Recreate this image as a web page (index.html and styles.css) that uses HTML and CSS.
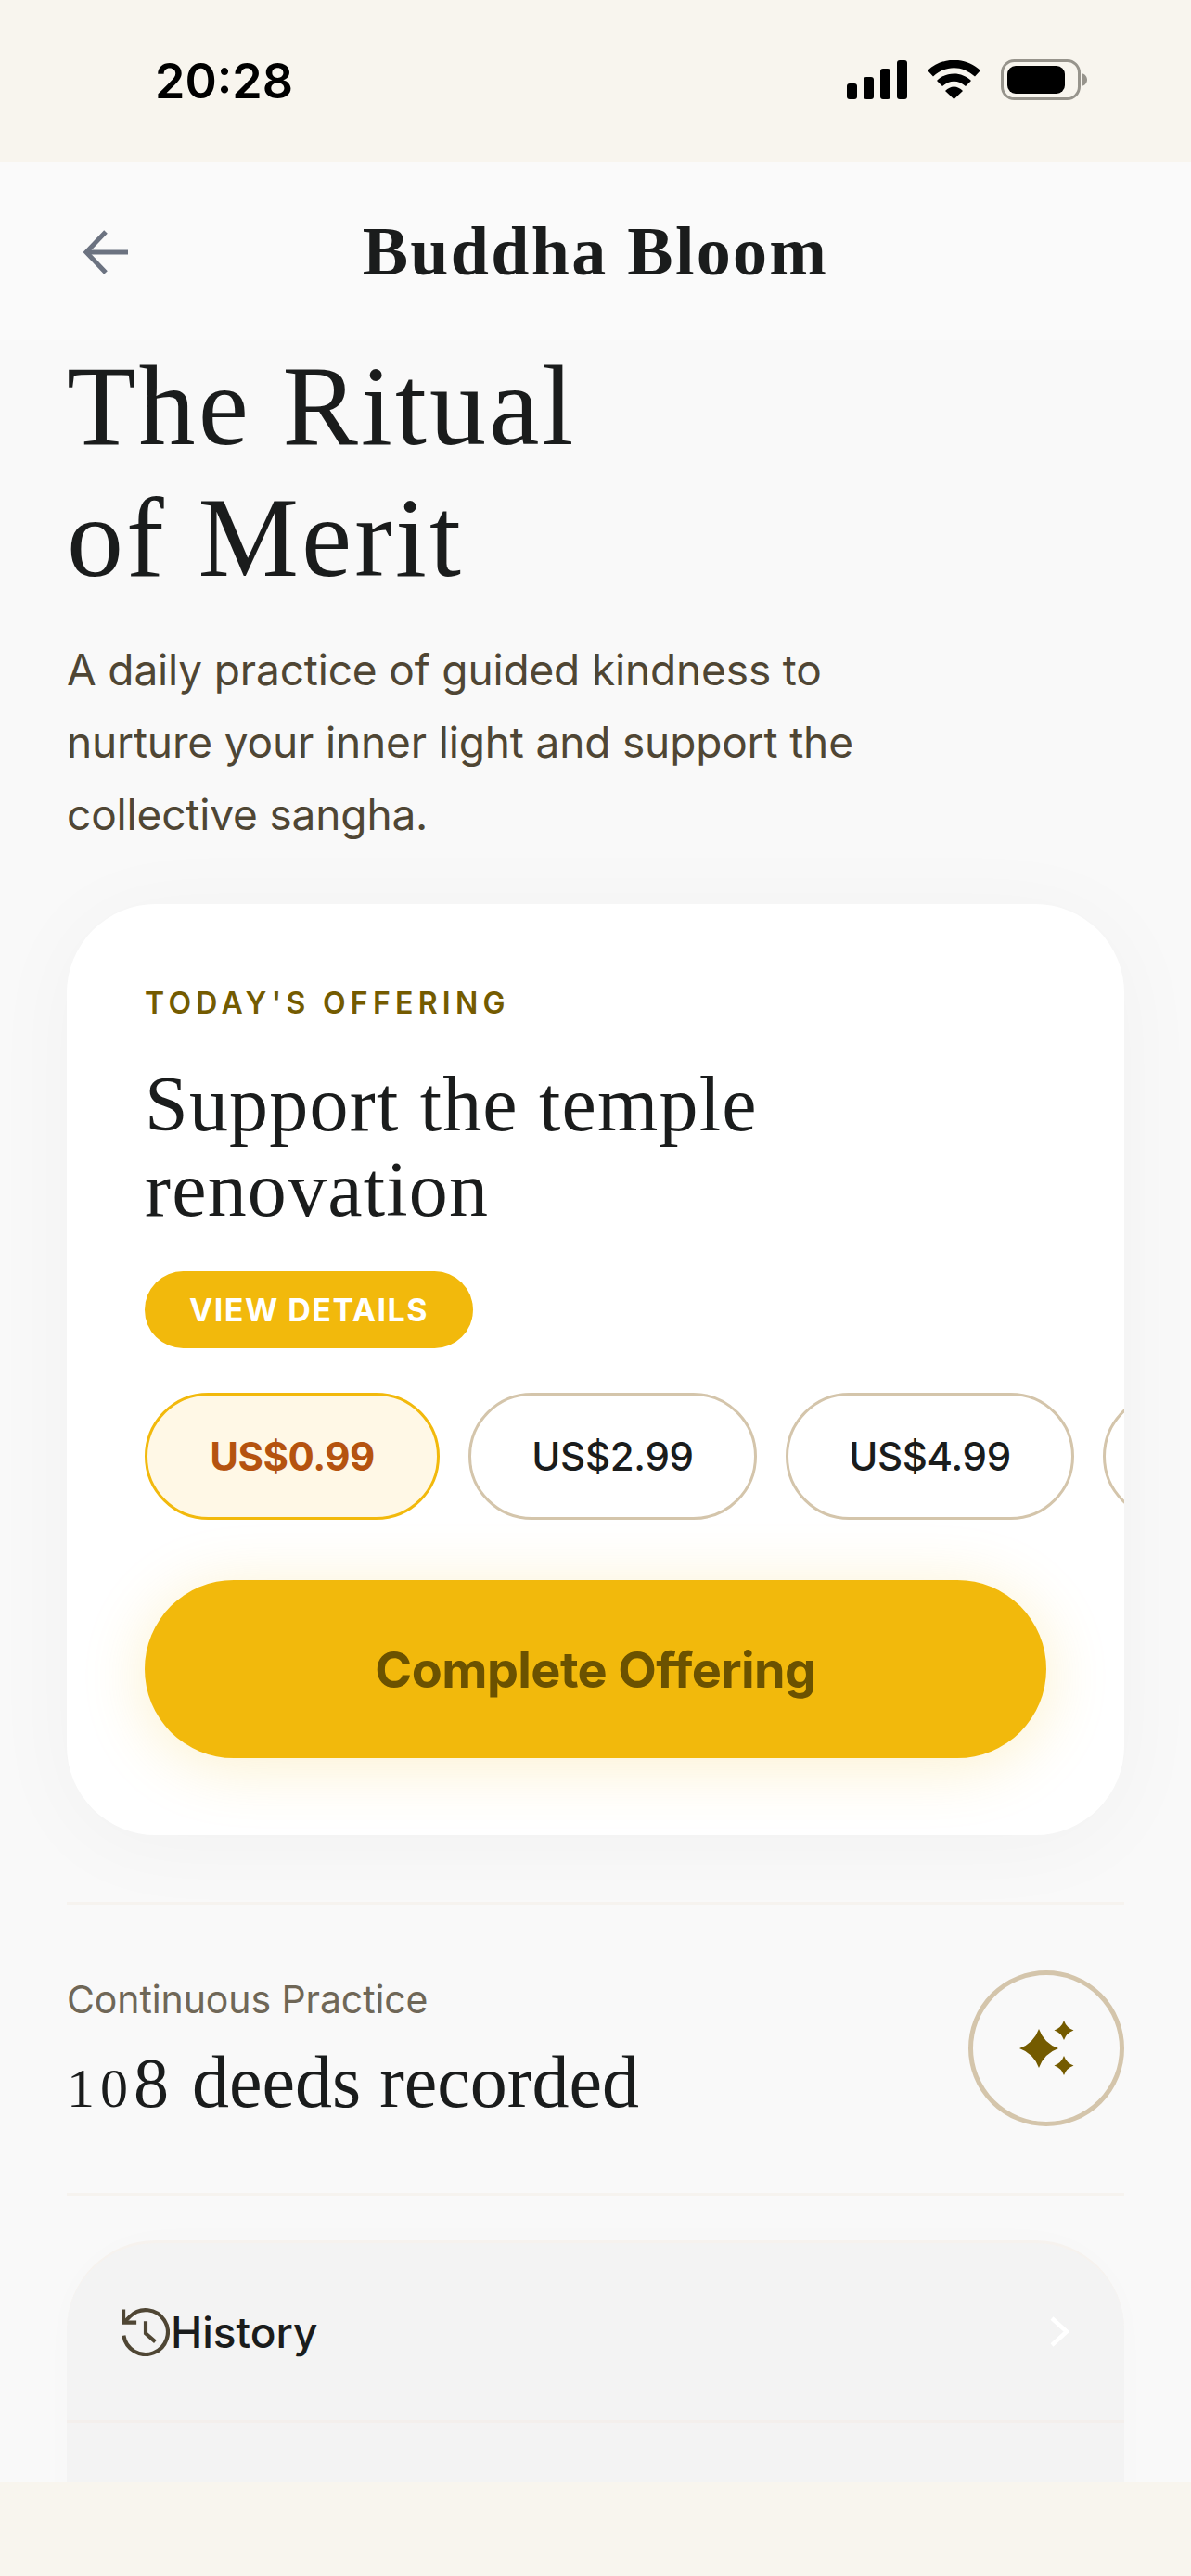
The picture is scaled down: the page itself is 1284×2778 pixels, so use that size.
FILE: index.html
```html
<!DOCTYPE html>
<html lang="en">

<head>
    <meta charset="UTF-8">
    <title>Buddha Bloom</title>
    <link rel="stylesheet" href="styles.css">
</head>

<body>
    <div class="status_bar">
        <span class="time">20:28</span>
        <div class="status_icons">
            <svg class="signal" viewBox="0 0 65 42">
                <rect x="0" y="25" width="11" height="17" rx="3"/>
                <rect x="18" y="18" width="11" height="24" rx="3"/>
                <rect x="36" y="9" width="11" height="33" rx="3"/>
                <rect x="54" y="0" width="11" height="42" rx="3"/>
            </svg>
            <svg class="wifi" viewBox="0 0 57 42">
                <path d="M0 11 C16 -4 41 -4 57 11 L51 17.5 C37 5 20 5 6 17.5 Z"/>
                <path d="M10 22 C20 12 37 12 47 22 L41 28 C33 21 24 21 16 28 Z"/>
                <path d="M19 33 C25 27 32 27 38 33 L28.5 42 Z"/>
            </svg>
            <svg class="battery" viewBox="0 0 93 44">
                <rect x="1.5" y="1.5" width="83" height="41" rx="13" fill="none" stroke="#97948c" stroke-width="3"/>
                <rect x="7" y="7" width="62" height="30" rx="9"/>
                <path d="M87 15 C91 16 93 19 93 22 C93 25 91 28 87 29 Z" fill="#97948c"/>
            </svg>
        </div>
    </div>

    <header class="nav">
        <svg class="back" viewBox="0 0 48 48" fill="none" stroke="#6b7280" stroke-width="5">
            <path d="M48 24H4"/>
            <path d="M24 2 3 24l21 22"/>
        </svg>
        <h2 class="brand">Buddha Bloom</h2>
    </header>

    <main class="page">
        <h1 class="hero_title">The Ritual<br>of Merit</h1>
        <p class="hero_text">A daily practice of guided kindness to<br>nurture your inner light and support the<br>collective sangha.</p>

        <section class="offer_card">
            <div class="eyebrow">TODAY'S OFFERING</div>
            <h3 class="offer_title">Support the temple<br>renovation</h3>
            <div class="details_pill">VIEW DETAILS</div>
            <div class="amounts">
                <div class="amount selected">US$0.99</div>
                <div class="amount">US$2.99</div>
                <div class="amount">US$4.99</div>
                <div class="amount"></div>
            </div>
            <div class="complete_btn">Complete Offering</div>
        </section>

        <section class="practice">
            <div class="practice_text">
                <div class="practice_label">Continuous Practice</div>
                <div class="practice_count"><span class="num_low">10</span><span class="num_high">8</span> deeds recorded</div>
            </div>
            <div class="spark_circle">
                <svg viewBox="0 0 60 60" fill="#745b00">
                    <path d="M21 9 Q26.5 24.5 42 30 Q26.5 35.5 21 51 Q15.5 35.5 0 30 Q15.5 24.5 21 9 Z"/>
                    <path d="M48 0 Q50.75 7.75 58.5 10.500 Q50.75 13.25 48 21 Q45.25 13.25 37.5 10.500 Q45.25 7.75 48 0 Z"/>
                    <path d="M48 38 Q50.75 45.75 58.5 48.500 Q50.75 51.25 48 59 Q45.25 51.25 37.5 48.500 Q45.25 45.75 48 38 Z"/>
                </svg>
            </div>
        </section>

        <section class="menu_card">
            <div class="menu_row">
                <div class="menu_left">
                    <svg class="history_icon" viewBox="2 2 20 20" fill="none" stroke="#4f4634" stroke-width="1.6">
                        <path d="M2.9 13.4 A9.2 9.2 0 1 0 5.5 5.5 L3 8"/>
                        <path d="M2.8 2.6V8H8.200"/>
                        <path d="M12 7.500V12.500L16 16"/>
                    </svg>
                    <span>History</span>
                </div>
                <svg class="chevron" viewBox="0 0 21 33" fill="none" stroke="#fff" stroke-width="4.500">
                    <path d="M2 2 18 16.500 2 31"/>
                </svg>
            </div>
        </section>
    </main>

    <div class="bottom_bar"></div>
</body>

</html>
```

FILE: styles.css
```css
* {
    box-sizing: border-box;
}

body {
    margin: 0;
    width: 1284px;
    height: 2778px;
    display: flex;
    flex-direction: column;
    overflow: hidden;
    background-color: #f9f9f9;
    font-family: Inter, "Liberation Sans", sans-serif;
    color: #1a1c1c;
}

h1,
h2,
h3,
p {
    margin: 0;
    font-weight: 400;
}

/* status bar */
.status_bar {
    height: 175px;
    flex-shrink: 0;
    background-color: #f8f5ee;
    display: flex;
    justify-content: space-between;
    align-items: flex-start;
    padding: 58px 112px 0 167px;
}

.time {
    font-size: 52px;
    font-weight: 600;
    line-height: 60px;
    color: #000;
}

.status_icons {
    display: flex;
    align-items: flex-start;
    gap: 22px;
    padding-top: 7px;
}

.signal {
    width: 65px;
    height: 42px;
}

.wifi {
    width: 57px;
    height: 42px;
}

.battery {
    width: 93px;
    height: 44px;
    margin-top: -1px;
}

/* nav */
.nav {
    height: 192px;
    flex-shrink: 0;
    background-color: #fafafa;
    display: flex;
    align-items: center;
    justify-content: center;
    position: relative;
}

.back {
    position: absolute;
    left: 90px;
    top: 73px;
    width: 48px;
    height: 48px;
}

.brand {
    font-family: "Liberation Serif", serif;
    font-size: 74px;
    font-weight: 700;
    line-height: 80px;
    letter-spacing: 2.3px;
}

/* page */
.page {
    flex: 1;
    min-height: 0;
    overflow: hidden;
    padding: 0 72px;
}

.hero_title {
    font-family: "Liberation Serif", serif;
    font-size: 122px;
    line-height: 142px;
    letter-spacing: 3.1px;
}

.hero_text {
    margin-top: 32px;
    font-size: 46px;
    line-height: 78px;
    letter-spacing: -0.15px;
    color: #4f4634;
}

.offer_card {
    margin-top: 58px;
    padding: 85px 84px 83px;
    background-color: #fff;
    border-radius: 96px;
    box-shadow: 0 10px 100px rgba(0, 0, 0, 0.035);
}

.eyebrow {
    font-size: 32px;
    font-weight: 600;
    line-height: 44px;
    letter-spacing: 5.3px;
    color: #745b00;
}

.offer_title {
    margin-top: 41px;
    font-family: "Liberation Serif", serif;
    font-size: 84px;
    line-height: 92px;
    letter-spacing: 1.2px;
}

.details_pill {
    width: 354px;
    height: 83px;
    margin-top: 42px;
    border-radius: 42px;
    background-color: #f2b90c;
    color: #fff;
    font-size: 34px;
    font-weight: 700;
    letter-spacing: 1.5px;
    display: flex;
    align-items: center;
    justify-content: center;
}

.amounts {
    display: flex;
    gap: 31px;
    margin-top: 48px;
    margin-right: -84px;
    overflow: hidden;
}

.amount {
    flex-shrink: 0;
    width: 311px;
    height: 137px;
    border: 3px solid #d4c5ab;
    border-radius: 69px;
    font-size: 42px;
    font-weight: 450;
    letter-spacing: -0.3px;
    display: flex;
    align-items: center;
    justify-content: center;
}

.amount.selected {
    width: 318px;
    background-color: #fff8e6;
    border-color: #f2b90c;
    color: #b5530f;
    font-weight: 700;
    letter-spacing: -0.5px;
}

.complete_btn {
    height: 192px;
    margin-top: 65px;
    border-radius: 96px;
    background-color: #f2b90c;
    box-shadow: 0 8px 70px rgba(242, 185, 12, 0.2);
    color: #6b5200;
    font-size: 54px;
    font-weight: 700;
    letter-spacing: -0.6px;
    display: flex;
    align-items: center;
    justify-content: center;
}

/* practice row */
.practice {
    margin-top: 72px;
    padding: 71px 0 67px;
    border-top: 3px solid #f6f3ef;
    border-bottom: 3px solid #f6f3ef;
    display: flex;
    justify-content: space-between;
    align-items: flex-start;
}

.practice_text {
    margin-top: 3px;
}

.practice_label {
    font-size: 41px;
    line-height: 56px;
    letter-spacing: -0.1px;
    color: #6f6757;
}

.practice_count {
    margin-top: 15px;
    font-family: "Liberation Serif", serif;
    font-size: 80px;
    line-height: 92px;
}

/* old style figures, the font only has lining ones */
.num_low {
    font-size: 60px;
    letter-spacing: 6px;
}

.num_high {
    font-size: 76px;
    margin-right: 5px;
}

.spark_circle {
    width: 168px;
    height: 168px;
    border: 5px solid #d4c5ab;
    border-radius: 50%;
    display: flex;
    align-items: center;
    justify-content: center;
}

.spark_circle svg {
    width: 60px;
    height: 60px;
    margin-left: 2px;
}

/* menu */
.menu_card {
    margin-top: 48px;
    height: 400px;
    background-color: #f3f3f3;
    border-top: 3px solid #f6f2ee;
    border-radius: 96px 96px 0 0;
    box-shadow: 0 0 60px rgba(0, 0, 0, 0.012);
}

.menu_row {
    height: 194px;
    padding: 0 59px;
    border-bottom: 3px solid #f3efec;
    display: flex;
    justify-content: space-between;
    align-items: center;
}

.menu_left {
    display: flex;
    align-items: center;
    gap: 1px;
    font-size: 46px;
    font-weight: 500;
}

.history_icon {
    width: 52px;
    height: 52px;
}

.chevron {
    width: 21px;
    height: 33px;
}

.bottom_bar {
    height: 101px;
    flex-shrink: 0;
    background-color: #f8f5ee;
}
```
